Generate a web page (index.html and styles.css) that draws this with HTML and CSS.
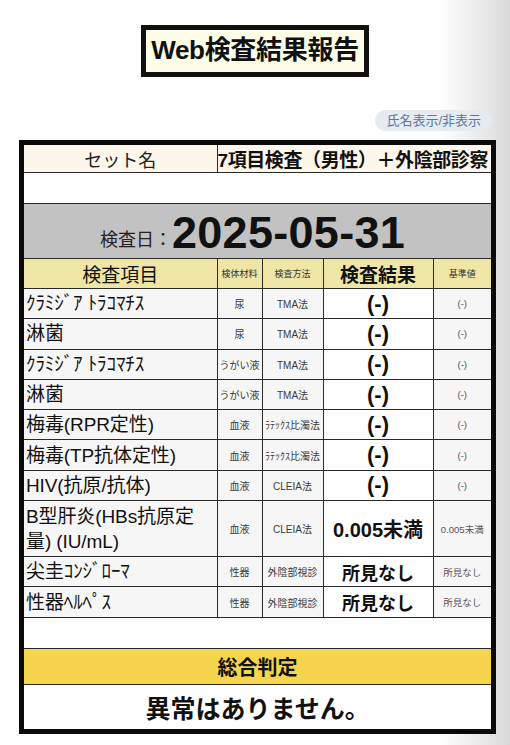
FILE: index.html
```html
<!DOCTYPE html>
<html lang="ja">
<head>
<meta charset="utf-8">
<title>Web検査結果報告</title>
<link rel="stylesheet" href="styles.css">
</head>
<body>
<div class="page">
  <div class="title-wrap"><h1 class="title">Web検査結果報告</h1></div>
  <div class="toggle-wrap"><span class="toggle">氏名表示/非表示</span></div>
  <div class="report">
    <table class="grid">
      <colgroup>
        <col class="c1"><col class="c2"><col class="c3"><col class="c4"><col class="c5">
      </colgroup>
      <tr class="r-set">
        <td class="set-label">セット名</td>
        <td class="set-value" colspan="4">7項目検査（男性）＋外陰部診察</td>
      </tr>
      <tr class="r-blank"><td colspan="5"></td></tr>
      <tr class="r-date">
        <td colspan="5"><div class="date-box"><span class="date-label">検査日：</span><span class="date">2025-05-31</span></div></td>
      </tr>
      <tr class="r-head">
        <td class="h-big">検査項目</td>
        <td class="h-small">検体材料</td>
        <td class="h-small">検査方法</td>
        <td class="h-big h-bold">検査結果</td>
        <td class="h-small">基準値</td>
      </tr>
      <tr class="r-data">
        <td class="item">ｸﾗﾐｼﾞｱ ﾄﾗｺﾏﾁｽ</td><td class="sm">尿</td><td class="sm">TMA法</td><td class="res">(-)</td><td class="sm ref">(-)</td>
      </tr>
      <tr class="r-data">
        <td class="item">淋菌</td><td class="sm">尿</td><td class="sm">TMA法</td><td class="res">(-)</td><td class="sm ref">(-)</td>
      </tr>
      <tr class="r-data">
        <td class="item">ｸﾗﾐｼﾞｱ ﾄﾗｺﾏﾁｽ</td><td class="sm">うがい液</td><td class="sm">TMA法</td><td class="res">(-)</td><td class="sm ref">(-)</td>
      </tr>
      <tr class="r-data">
        <td class="item">淋菌</td><td class="sm">うがい液</td><td class="sm">TMA法</td><td class="res">(-)</td><td class="sm ref">(-)</td>
      </tr>
      <tr class="r-data">
        <td class="item">梅毒(RPR定性)</td><td class="sm">血液</td><td class="sm">ﾗﾃｯｸｽ比濁法</td><td class="res">(-)</td><td class="sm ref">(-)</td>
      </tr>
      <tr class="r-data">
        <td class="item">梅毒(TP抗体定性)</td><td class="sm">血液</td><td class="sm">ﾗﾃｯｸｽ比濁法</td><td class="res">(-)</td><td class="sm ref">(-)</td>
      </tr>
      <tr class="r-data">
        <td class="item">HIV(抗原/抗体)</td><td class="sm">血液</td><td class="sm">CLEIA法</td><td class="res">(-)</td><td class="sm ref">(-)</td>
      </tr>
      <tr class="r-data r-tall">
        <td class="item">B型肝炎(HBs抗原定量) (IU/mL)</td><td class="sm">血液</td><td class="sm">CLEIA法</td><td class="res res-num">0.005未満</td><td class="sm ref">0.005未満</td>
      </tr>
      <tr class="r-data">
        <td class="item">尖圭ｺﾝｼﾞﾛｰﾏ</td><td class="sm">性器</td><td class="sm">外陰部視診</td><td class="res res-txt">所見なし</td><td class="sm ref">所見なし</td>
      </tr>
      <tr class="r-data">
        <td class="item">性器ﾍﾙﾍﾟｽ</td><td class="sm">性器</td><td class="sm">外陰部視診</td><td class="res res-txt">所見なし</td><td class="sm ref">所見なし</td>
      </tr>
      <tr class="r-blank2"><td colspan="5"></td></tr>
      <tr class="r-judge"><td colspan="5">総合判定</td></tr>
      <tr class="r-final"><td colspan="5">異常はありません。</td></tr>
    </table>
  </div>
</div>
</body>
</html>
```

FILE: styles.css
```css
html, body {
  margin: 0;
  padding: 0;
}
body {
  width: 510px;
  height: 745px;
  overflow: hidden;
  background: linear-gradient(to right, #ffffff 0%, #ffffff 86%, #e6e6e6 96%, #d8d8d8 100%);
  font-family: "Liberation Sans", "Noto Sans CJK JP", sans-serif;
  color: #111;
}
.page {
  padding-top: 25px;
}
.title-wrap {
  display: flex;
  justify-content: center;
}
.title {
  margin: 0;
  box-sizing: border-box;
  width: 228px;
  height: 52px;
  border: 5px solid #111;
  background: #fdfde8;
  font-size: 26px;
  font-weight: bold;
  line-height: 41px;
  text-align: center;
  letter-spacing: -0.3px;
  white-space: nowrap;
}
.toggle-wrap {
  display: flex;
  justify-content: flex-end;
  padding-right: 18px;
  margin-top: 33px;
}
.toggle {
  display: inline-block;
  height: 21px;
  line-height: 21px;
  padding: 0 11px;
  border-radius: 11px;
  background: #e6eaf1;
  color: #5a78a6;
  font-size: 13px;
}
.report {
  margin: 9px 0 0 19px;
  width: 477px;
  box-sizing: border-box;
  border: 5px solid #0a0a0a;
  background: #fff;
}
.grid {
  width: 467px;
  border-collapse: collapse;
  table-layout: fixed;
}
.c1 { width: 193px; }
.c2 { width: 45px; }
.c3 { width: 61px; }
.c4 { width: 110px; }
.c5 { width: 58px; }
.grid td {
  border: 1px solid #2a2a2a;
  padding: 0;
  text-align: center;
  vertical-align: middle;
  background: #f6f6f6;
}
.grid tr:first-child td { border-top: none; }
.grid tr:last-child td { border-bottom: none; }
.grid td:first-child { border-left: none; }
.grid td:last-child { border-right: none; }

.r-set td { height: 26px; font-size: 18px; }
.set-label { background: #fcf6eb !important; color: #222; }
.set-value {
  background: #fcf6eb !important;
  font-weight: bold;
  font-size: 19px !important;
  text-align: left !important;
  white-space: nowrap;
  overflow: hidden;
  letter-spacing: -0.4px;
}
.r-blank td { height: 30px; background: #fff !important; }
.r-date td {
  background: #c2c2c2 !important;
  vertical-align: top;
}
.date-box {
  box-sizing: border-box;
  height: 54px;
  overflow: hidden;
  padding: 6px 10px 0 0;
  display: flex;
  justify-content: center;
  align-items: baseline;
  line-height: 1;
}
.date-label {
  font-size: 18px;
  color: #222;
  position: relative;
  top: -2px;
}
.date {
  font-size: 45px;
  font-weight: bold;
  letter-spacing: 0.3px;
}
.r-head td {
  height: 29px;
  background: #efe6a6 !important;
}
.h-big { font-size: 19px; }
.h-bold { font-weight: bold; }
.h-small { font-size: 9px; color: #333; }
.r-data td { height: 29.3px; }
.r-tall td { height: 55px; }
.item {
  text-align: left !important;
  font-size: 19px;
  padding-left: 2px !important;
  line-height: 25px;
  letter-spacing: -0.1px;
}
.sm { font-size: 10px; color: #3a3a3a; }
.ref { color: #555; font-size: 9.5px; }
.res {
  background: #fff !important;
  font-size: 22px;
  font-weight: bold;
}
.res-num { font-size: 20px; }
.res-txt { font-size: 18px; }
.r-blank2 td { height: 30px; background: #fff !important; }
.r-judge td {
  height: 35px;
  background: #f5d54c !important;
  font-size: 20px;
  font-weight: bold;
}
.r-final td {
  height: 44px;
  background: #fff !important;
  font-size: 25px;
  font-weight: bold;
}
```
